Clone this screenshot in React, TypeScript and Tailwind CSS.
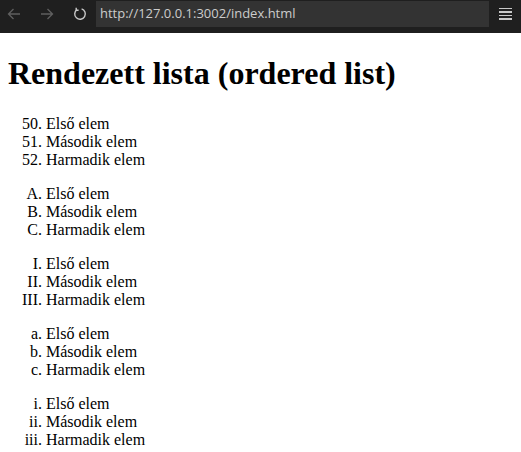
import React from 'react';

const items = ['Első elem', 'Második elem', 'Harmadik elem'];

const lists: { cls: string; start?: number }[] = [
  { cls: 'list-decimal', start: 50 },
  { cls: 'list-[upper-alpha]' },
  { cls: 'list-[upper-roman]' },
  { cls: 'list-[lower-alpha]' },
  { cls: 'list-[lower-roman]' },
];

const BrowserBar: React.FC = () => (
  <div className="h-[33px] bg-[#1f1f1f] flex items-start">
    <div className="h-[27px] flex items-center">
      <svg width="14" height="12" viewBox="0 0 14 12" className="ml-[7px]" fill="none" stroke="#5f5f5f" strokeWidth="1.3">
        <path d="M13 6H1.5M6.5 1L1.5 6l5 5" />
      </svg>
      <svg width="14" height="12" viewBox="0 0 14 12" className="ml-[19px]" fill="none" stroke="#5f5f5f" strokeWidth="1.3">
        <path d="M1 6h11.5M7.5 1l5 5-5 5" />
      </svg>
      <svg width="14" height="14" viewBox="0 0 14 14" className="ml-[19px]" fill="none" stroke="#c8c8c8" strokeWidth="1.4">
        <path d="M4 2.6A5.3 5.3 0 1 0 8.6 1.9" />
        <path d="M3.2 0.8v2.4h2.4" />
      </svg>
    </div>
    <div className="ml-[9px] mt-[1px] h-[26px] w-[393px] bg-[#333333] flex items-center pl-[4px] text-[13px] text-[#cccccc]" style={{ fontFamily: '"Open Sans", "Noto Sans", sans-serif' }}>
      http://127.0.0.1:3002/index.html
    </div>
    <div className="h-[27px] flex-1 flex items-center justify-center">
      <div className="flex flex-col gap-[2px] w-[13px]">
        <div className="h-[1.5px] bg-[#c8c8c8]" />
        <div className="h-[1.5px] bg-[#c8c8c8]" />
        <div className="h-[1.5px] bg-[#c8c8c8]" />
        <div className="h-[1.5px] bg-[#c8c8c8]" />
      </div>
    </div>
  </div>
);

const App: React.FC = () => {
  return (
    <div className="min-h-screen bg-white">
      <BrowserBar />
      <div className="m-2 text-black text-base" style={{ fontFamily: '"Liberation Serif", "Times New Roman", serif' }}>
        <h1 className="text-[32px] font-bold mt-[22px] mb-[23px] leading-[37px]">Rendezett lista (ordered list)</h1>
        {lists.map((l, i) => (
          <ol key={i} start={l.start} className={`${l.cls} pl-[38px] my-4 leading-[18px]`}>
            {items.map((t) => (
              <li key={t}>{t}</li>
            ))}
          </ol>
        ))}
      </div>
    </div>
  );
};

export default App;
